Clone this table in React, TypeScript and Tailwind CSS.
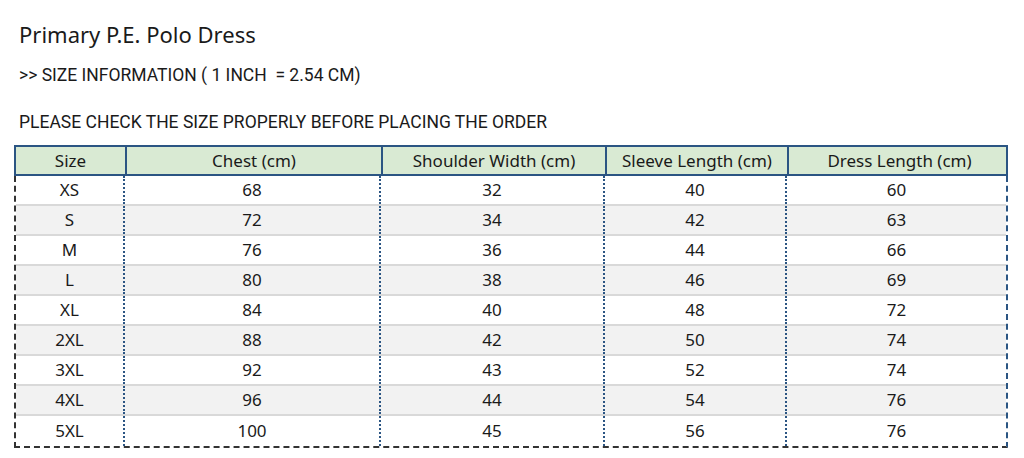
import React from "react";

const headers = ["Size", "Chest (cm)", "Shoulder Width (cm)", "Sleeve Length (cm)", "Dress Length (cm)"];
const rows = [
  ["XS", "68", "32", "40", "60"],
  ["S", "72", "34", "42", "63"],
  ["M", "76", "36", "44", "66"],
  ["L", "80", "38", "46", "69"],
  ["XL", "84", "40", "48", "72"],
  ["2XL", "88", "42", "50", "74"],
  ["3XL", "92", "43", "52", "74"],
  ["4XL", "96", "44", "54", "76"],
  ["5XL", "100", "45", "56", "76"],
];

export default function App() {
  return (
    <div className="w-[1024px] h-[458px] bg-white text-[#1a1a1a] overflow-hidden" style={{ fontFamily: "'Noto Sans', Roboto, sans-serif" }}>
      <div className="pl-[19px] pt-[20px] text-[22px] leading-[28px]">Primary P.E. Polo Dress</div>
      <div className="pl-[19px] pt-[16px] text-[17.5px] leading-[22px]" style={{ fontFamily: "Roboto, sans-serif" }}>
        &gt;&gt; SIZE INFORMATION ( 1 INCH&nbsp; = 2.54 CM)
      </div>
      <div className="pl-[19px] pt-[25px] text-[17.5px] leading-[22px]" style={{ fontFamily: "Roboto, sans-serif" }}>
        PLEASE CHECK THE SIZE PROPERLY BEFORE PLACING THE ORDER
      </div>
      <div className="ml-[14px] mt-[12px] w-[994px]">
        <div className="grid grid-cols-[111px_256px_224px_182px_221px] border-2 border-[#2b5583] bg-[#d9ead3] h-[31px]">
          {headers.map((h, i) => (
            <div
              key={h}
              className={`flex items-center justify-center text-[17px] ${i < 4 ? "border-r-2 border-[#2b5583]" : ""}`}
            >
              {h}
            </div>
          ))}
        </div>
        <div className="border-l-2 border-r-2 border-b-2 border-dashed border-l-[#333] border-b-[#333] border-r-[#2b5583]">
          {rows.map((r, ri) => (
            <div
              key={ri}
              className={`grid grid-cols-[109px_256px_224px_182px_219px] h-[30px] ${ri % 2 === 1 ? "bg-[#f2f2f2]" : "bg-white"} ${ri < rows.length - 1 ? "border-b-2 border-[#d9d9d9]" : ""}`}
            >
              {r.map((c, ci) => (
                <div
                  key={ci}
                  className={`flex items-center justify-center text-[17px] ${ci < 4 ? "border-r-2 border-dotted border-[#2b5583]" : ""}`}
                >
                  {c}
                </div>
              ))}
            </div>
          ))}
        </div>
      </div>
    </div>
  );
}
